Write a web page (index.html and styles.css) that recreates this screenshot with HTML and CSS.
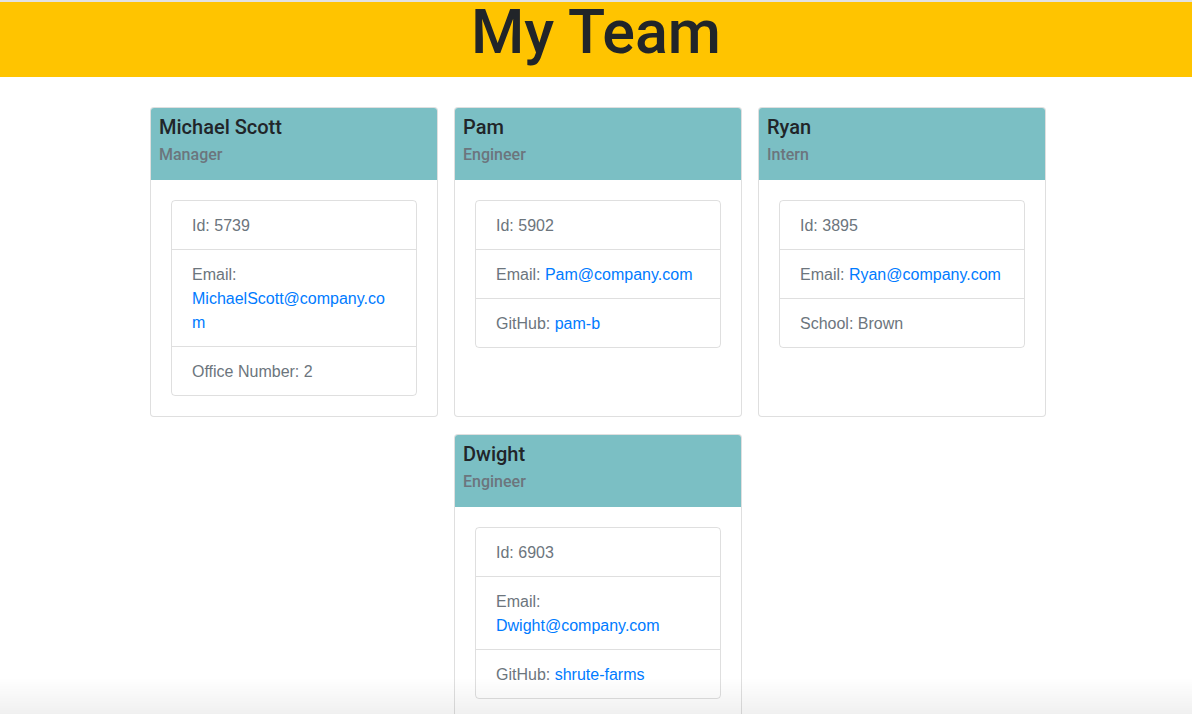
FILE: index.html
```html
<!DOCTYPE html>
<html lang="en">
<head>
<meta charset="utf-8">
<title>My Team</title>
<link rel="stylesheet" href="styles.css">
</head>
<body>
<header class="banner">
  <h1 class="banner-title">My Team</h1>
</header>
<main class="team">
  <div class="team-row">
    <section class="card">
      <div class="card-header">
        <h2 class="card-name">Michael Scott</h2>
        <h3 class="card-role">Manager</h3>
      </div>
      <div class="card-body">
        <ul class="info-list">
          <li class="info-item">Id: 5739</li>
          <li class="info-item">Email: <a class="info-link" href="#">MichaelScott@company.com</a></li>
          <li class="info-item">Office Number: 2</li>
        </ul>
      </div>
    </section>
    <section class="card">
      <div class="card-header">
        <h2 class="card-name">Pam</h2>
        <h3 class="card-role">Engineer</h3>
      </div>
      <div class="card-body">
        <ul class="info-list">
          <li class="info-item">Id: 5902</li>
          <li class="info-item">Email: <a class="info-link" href="#">Pam@company.com</a></li>
          <li class="info-item">GitHub: <a class="info-link" href="#">pam-b</a></li>
        </ul>
      </div>
    </section>
    <section class="card">
      <div class="card-header">
        <h2 class="card-name">Ryan</h2>
        <h3 class="card-role">Intern</h3>
      </div>
      <div class="card-body">
        <ul class="info-list">
          <li class="info-item">Id: 3895</li>
          <li class="info-item">Email: <a class="info-link" href="#">Ryan@company.com</a></li>
          <li class="info-item">School: Brown</li>
        </ul>
      </div>
    </section>
    <section class="card">
      <div class="card-header">
        <h2 class="card-name">Dwight</h2>
        <h3 class="card-role">Engineer</h3>
      </div>
      <div class="card-body">
        <ul class="info-list">
          <li class="info-item">Id: 6903</li>
          <li class="info-item">Email: <a class="info-link" href="#">Dwight@company.com</a></li>
          <li class="info-item">GitHub: <a class="info-link" href="#">shrute-farms</a></li>
        </ul>
      </div>
    </section>
  </div>
</main>
<div class="bottom-fade"></div>
</body>
</html>
```
FILE: styles.css
```css
* {
  box-sizing: border-box;
}

html, body {
  margin: 0;
  padding: 0;
}

body {
  font-family: "Liberation Sans", Arial, sans-serif;
  font-size: 16px;
  line-height: 1.5;
  color: #212529;
  background: #ffffff;
}

.banner {
  background: #ffc400;
  border-top: 2px solid #e2e2e2;
  padding: 0 0 15px;
  margin-bottom: 22px;
  text-align: center;
}

.banner-title {
  margin: 0;
  font-family: Roboto, "Liberation Sans", sans-serif;
  font-size: 61px;
  line-height: 60px;
  font-weight: 500;
  color: #212529;
}

.team {
  width: 916px;
  margin: 0 auto;
  padding-left: 4px;
}

.team-row {
  display: flex;
  flex-wrap: wrap;
  justify-content: center;
}

.card {
  width: 288px;
  margin: 8px 8px 9px;
  border: 1px solid rgba(0, 0, 0, 0.125);
  border-radius: 4px;
  background: #fff;
  display: flex;
  flex-direction: column;
}

.card-header {
  background: #7bbfc4;
  padding: 7px 8px 16px;
  border-radius: 3px 3px 0 0;
}

.card-name {
  margin: 0 0 6px;
  font-family: Roboto, "Liberation Sans", sans-serif;
  font-size: 20px;
  line-height: 24px;
  font-weight: 500;
  color: #212529;
}

.card-role {
  margin: 0;
  font-family: Roboto, "Liberation Sans", sans-serif;
  font-size: 16px;
  line-height: 19px;
  font-weight: 500;
  color: #6c757d;
}

.card-body {
  padding: 20px;
  flex: 1;
}

.info-list {
  list-style: none;
  margin: 0;
  padding: 0;
  border: 1px solid rgba(0, 0, 0, 0.125);
  border-radius: 4px;
}

.info-item {
  padding: 13px 20px 11px;
  color: #6c757d;
  overflow-wrap: break-word;
  border-top: 1px solid rgba(0, 0, 0, 0.125);
}

.info-item:first-child {
  border-top: none;
}

.info-link {
  color: #007bff;
  text-decoration: none;
}

.bottom-fade {
  position: fixed;
  left: 0;
  right: 0;
  bottom: 0;
  height: 36px;
  background: linear-gradient(to bottom, rgba(0, 0, 0, 0), rgba(0, 0, 0, 0.06));
  pointer-events: none;
}
```
